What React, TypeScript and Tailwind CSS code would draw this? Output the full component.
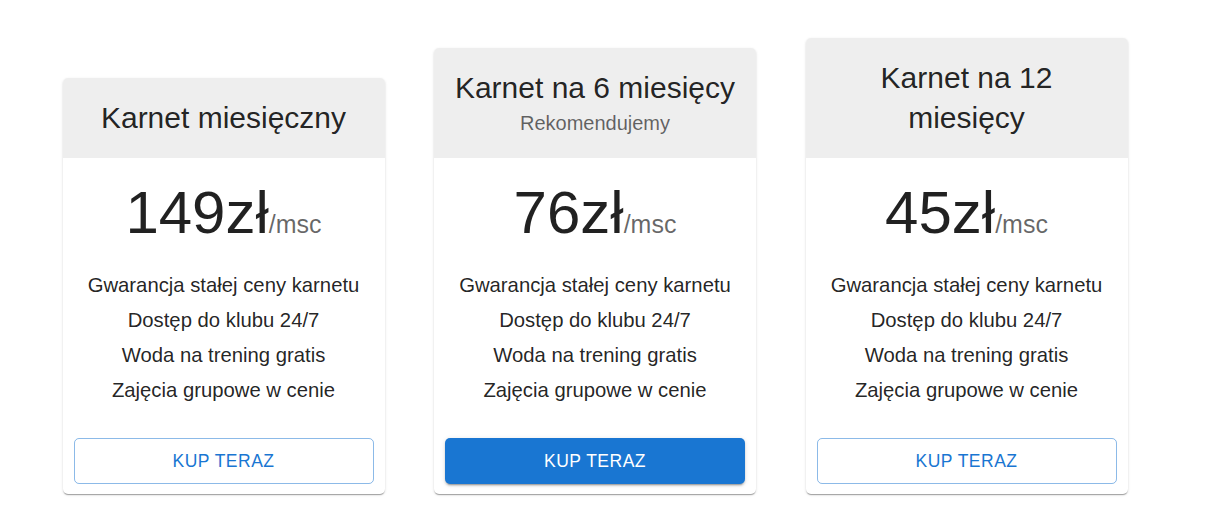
const plans = [
  {
    title: 'Karnet miesięczny',
    subheader: '',
    price: '149',
    featured: false,
  },
  {
    title: 'Karnet na 6 miesięcy',
    subheader: 'Rekomendujemy',
    price: '76',
    featured: true,
  },
  {
    title: 'Karnet na 12 miesięcy',
    subheader: '',
    price: '45',
    featured: false,
  },
];

const features = [
  'Gwarancja stałej ceny karnetu',
  'Dostęp do klubu 24/7',
  'Woda na trening gratis',
  'Zajęcia grupowe w cenie',
];

function PlanCard({ plan }: { plan: (typeof plans)[number] }) {
  return (
    <div className="w-[322px] bg-white rounded-[5px] overflow-hidden shadow-[0px_2px_1px_-1px_rgba(0,0,0,0.2),0px_1px_1px_0px_rgba(0,0,0,0.14),0px_1px_3px_0px_rgba(0,0,0,0.12)]">
      {/* Header */}
      <div className="bg-[#eeeeee] px-5 pt-5 pb-[19.5px] text-center">
        <h2 className="text-[30px] leading-[40px] text-black/[0.87]">{plan.title}</h2>
        {plan.subheader && (
          <p className="text-[20px] leading-[30px] text-black/60">{plan.subheader}</p>
        )}
      </div>

      {/* Content */}
      <div className="px-5 pt-[20.5px] pb-5">
        <div className="flex justify-center items-baseline mb-5">
          <span className="text-[60px] leading-[70px] text-black/[0.87]">{plan.price}zł</span>
          <span className="text-[25px] leading-[40px] text-black/60">/msc</span>
        </div>
        <ul>
          {features.map((f) => (
            <li key={f} className="text-[20.3px] leading-[35px] text-center text-black/[0.87]">
              {f}
            </li>
          ))}
        </ul>
      </div>

      {/* Actions */}
      <div className="px-[11px] pt-[10px] pb-[10px]">
        {plan.featured ? (
          <button className="w-full h-[46px] flex items-center justify-center rounded-[5px] bg-[#1976d2] text-white text-[17.5px] font-medium uppercase tracking-[0.02857em] shadow-[0px_3px_1px_-2px_rgba(0,0,0,0.2),0px_2px_2px_0px_rgba(0,0,0,0.14),0px_1px_5px_0px_rgba(0,0,0,0.12)]">
            Kup teraz
          </button>
        ) : (
          <button className="w-full h-[46px] flex items-center justify-center rounded-[5px] border border-[#1976d2]/50 text-[#1976d2] text-[17.5px] font-medium uppercase tracking-[0.02857em]">
            Kup teraz
          </button>
        )}
      </div>
    </div>
  );
}

export default function App() {
  return (
    <div className="w-[1227px] h-[508px] bg-white font-['Liberation_Sans',Arial,sans-serif]">
      <div className="flex items-end gap-[49.5px] pl-[62.5px] pt-[38px]">
        {plans.map((plan) => (
          <PlanCard key={plan.title} plan={plan} />
        ))}
      </div>
    </div>
  );
}
